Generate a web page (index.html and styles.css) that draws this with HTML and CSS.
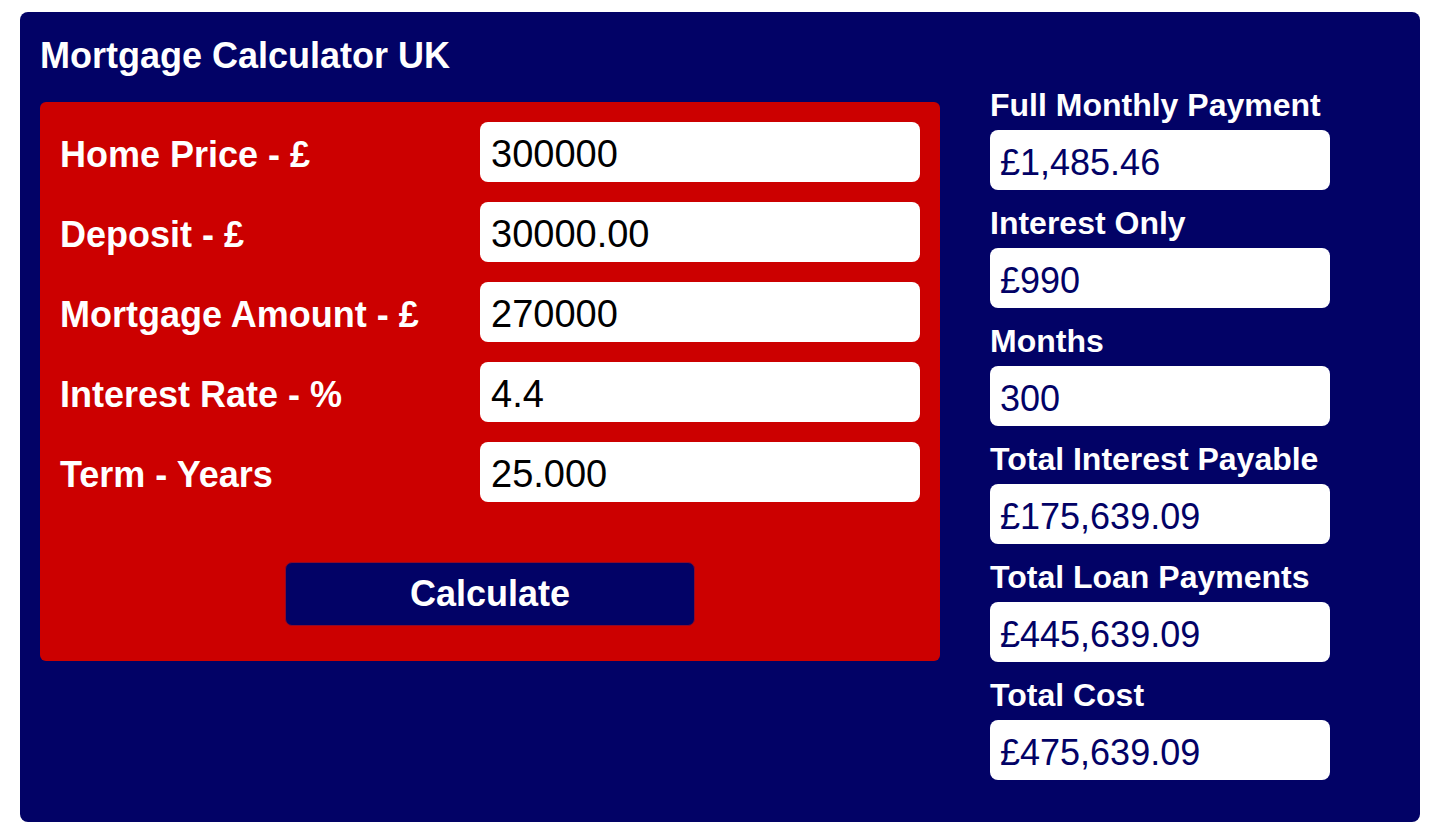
FILE: index.html
```html
<!DOCTYPE html>
<html lang="en">
<head>
<meta charset="utf-8">
<title>Mortgage Calculator UK</title>
<link rel="stylesheet" href="styles.css">
</head>
<body>
<div class="calc">
  <div class="left">
    <h1 class="title">Mortgage Calculator UK</h1>
    <div class="panel">
      <div class="rows">
        <label class="label">Home Price - £</label>
        <input class="field" type="text" value="300000">
        <label class="label">Deposit - £</label>
        <input class="field" type="text" value="30000.00">
        <label class="label">Mortgage Amount - £</label>
        <input class="field" type="text" value="270000">
        <label class="label">Interest Rate - %</label>
        <input class="field" type="text" value="4.4">
        <label class="label">Term - Years</label>
        <input class="field" type="text" value="25.000">
      </div>
      <button class="btn" type="button">Calculate</button>
    </div>
  </div>
  <div class="right">
    <div class="out-label">Full Monthly Payment</div>
    <div class="out">£1,485.46</div>
    <div class="out-label">Interest Only</div>
    <div class="out">£990</div>
    <div class="out-label">Months</div>
    <div class="out">300</div>
    <div class="out-label">Total Interest Payable</div>
    <div class="out">£175,639.09</div>
    <div class="out-label">Total Loan Payments</div>
    <div class="out">£445,639.09</div>
    <div class="out-label">Total Cost</div>
    <div class="out last">£475,639.09</div>
  </div>
</div>
</body>
</html>
```
FILE: styles.css
```css
html, body {
  margin: 0;
  padding: 0;
  background: #ffffff;
}

body {
  font-family: "Liberation Sans", Arial, Helvetica, sans-serif;
}

.calc {
  margin: 12px 0 0 20px;
  width: 1400px;
  height: 810px;
  box-sizing: border-box;
  background: #020266;
  border-radius: 8px;
  display: flex;
  padding: 0 20px;
}

.left {
  width: 900px;
  padding-top: 23px;
}

.title {
  margin: 0 0 26px 0;
  font-size: 36px;
  line-height: 41px;
  font-weight: bold;
  color: #ffffff;
}

.panel {
  height: 559px;
  box-sizing: border-box;
  background: #cc0000;
  border-radius: 6px;
  padding: 20px 20px 0 20px;
}

.rows {
  display: grid;
  grid-template-columns: 1fr 440px;
  grid-auto-rows: 60px;
  row-gap: 20px;
}

.label {
  display: flex;
  align-items: center;
  padding-top: 5px;
  font-size: 36px;
  font-weight: bold;
  color: #ffffff;
}

.field {
  display: block;
  width: 440px;
  height: 60px;
  box-sizing: border-box;
  border: none;
  border-radius: 8px;
  background: #ffffff;
  padding: 4px 11px 0 11px;
  margin: 0;
  font-family: "Liberation Sans", Arial, Helvetica, sans-serif;
  font-size: 38px;
  color: #000000;
  outline: none;
}

.btn {
  display: block;
  width: 410px;
  height: 64px;
  margin: 60px auto 0 auto;
  background: #020266;
  border: 1px solid #8a0a2a;
  border-radius: 7px;
  color: #ffffff;
  font-family: "Liberation Sans", Arial, Helvetica, sans-serif;
  font-size: 36px;
  font-weight: bold;
  padding: 0;
  cursor: pointer;
}

.right {
  width: 340px;
  margin-left: 50px;
  padding-top: 75px;
}

.out-label {
  font-size: 32px;
  line-height: 37px;
  font-weight: bold;
  color: #ffffff;
  margin-bottom: 6px;
  white-space: nowrap;
}

.out {
  height: 60px;
  box-sizing: border-box;
  background: #ffffff;
  border-radius: 8px;
  color: #020266;
  font-size: 36px;
  line-height: 54px;
  padding: 6px 10px 0 10px;
  margin-bottom: 15px;
}

.out.last {
  margin-bottom: 0;
}
```
